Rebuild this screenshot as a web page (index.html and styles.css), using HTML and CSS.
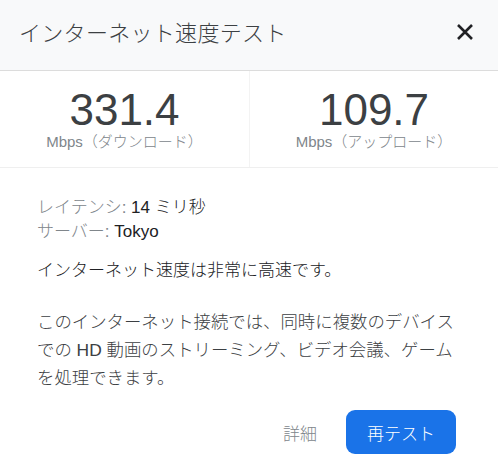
FILE: index.html
```html
<!DOCTYPE html>
<html lang="ja">

<head>
  <meta charset="UTF-8">
  <meta name="viewport" content="width=device-width, initial-scale=1.0">
  <title>インターネット速度テスト</title>
  <link rel="stylesheet" href="styles.css">
</head>

<body>
  <div class="speed-card">
    <div class="header">
      <h1 class="title">インターネット速度テスト</h1>
      <span class="close">
        <svg width="18" height="18" viewBox="0 0 18 18">
          <path d="M2 2L16 16M16 2L2 16" stroke="#202124" stroke-width="2.6" fill="none"/>
        </svg>
      </span>
    </div>

    <ul class="stats">
      <li>
        <div class="num">331.4</div>
        <div class="unit">Mbps（ダウンロード）</div>
      </li>
      <li>
        <div class="num">109.7</div>
        <div class="unit">Mbps（アップロード）</div>
      </li>
    </ul>

    <div class="content">
      <div class="meta">
        <div><span class="label">レイテンシ:</span> 14 ミリ秒</div>
        <div><span class="label">サーバー:</span> Tokyo</div>
      </div>
      <p class="summary">インターネット速度は非常に高速です。</p>
      <p class="desc">このインターネット接続では、同時に複数のデバイスでの HD 動画のストリーミング、ビデオ会議、ゲームを処理できます。</p>

      <div class="actions">
        <span class="more">詳細</span>
        <button class="retest">再テスト</button>
      </div>
    </div>
  </div>
</body>

</html>
```

FILE: styles.css
```css
* {
  box-sizing: border-box;
}

body {
  margin: 0;
  background: #fff;
  font-family: "Liberation Sans", Arial, "Noto Sans CJK JP", sans-serif;
  font-weight: 300;
  color: #202124;
}

ul,
li {
  margin: 0;
  padding: 0;
  list-style: none;
}

.speed-card {
  width: 498px;
}

.header {
  height: 71px;
  background: #f8f9fa;
  border-bottom: 1px solid #dcdcdc;
  display: flex;
  align-items: center;
  justify-content: space-between;
  padding: 0 24px 2px 19px;
}

.title {
  margin: 0;
  font-size: 22px;
  font-weight: 300;
  line-height: 30px;
  color: #3c4043;
  letter-spacing: 0.3px;
}

.close {
  display: flex;
  margin-top: -4px;
}

.stats {
  display: grid;
  grid-template-columns: 250px 1fr;
  height: 97px;
  border-bottom: 1px solid #efefef;
}

.stats>li {
  display: flex;
  flex-direction: column;
  align-items: center;
  padding-top: 16px;
}

.stats>li:first-child {
  border-right: 1px solid #f3f3f3;
}

.num {
  font-size: 44px;
  line-height: 46px;
  color: #3c4043;
}

.unit {
  font-size: 15px;
  line-height: 20px;
  color: #80868b;
  margin-top: -1px;
}

.content {
  padding: 28px 40px 0 37px;
}

.meta {
  font-size: 17px;
  line-height: 24px;
}

.label {
  color: #80868b;
}

.summary {
  margin: 15px 0 0;
  font-size: 17px;
  line-height: 24px;
}

.desc {
  margin: 25px 0 0;
  font-size: 17.4px;
  line-height: 28px;
  color: #3c4043;
}

.actions {
  display: flex;
  justify-content: flex-end;
  align-items: center;
  gap: 29px;
  margin-top: 18px;
  padding-right: 2px;
}

.more {
  font-size: 17px;
  color: #80868b;
}

.retest {
  width: 110px;
  height: 44px;
  border: none;
  border-radius: 9px;
  background: #1a73e8;
  color: #fff;
  font-family: inherit;
  font-size: 17px;
  font-weight: 300;
  cursor: pointer;
}
```
